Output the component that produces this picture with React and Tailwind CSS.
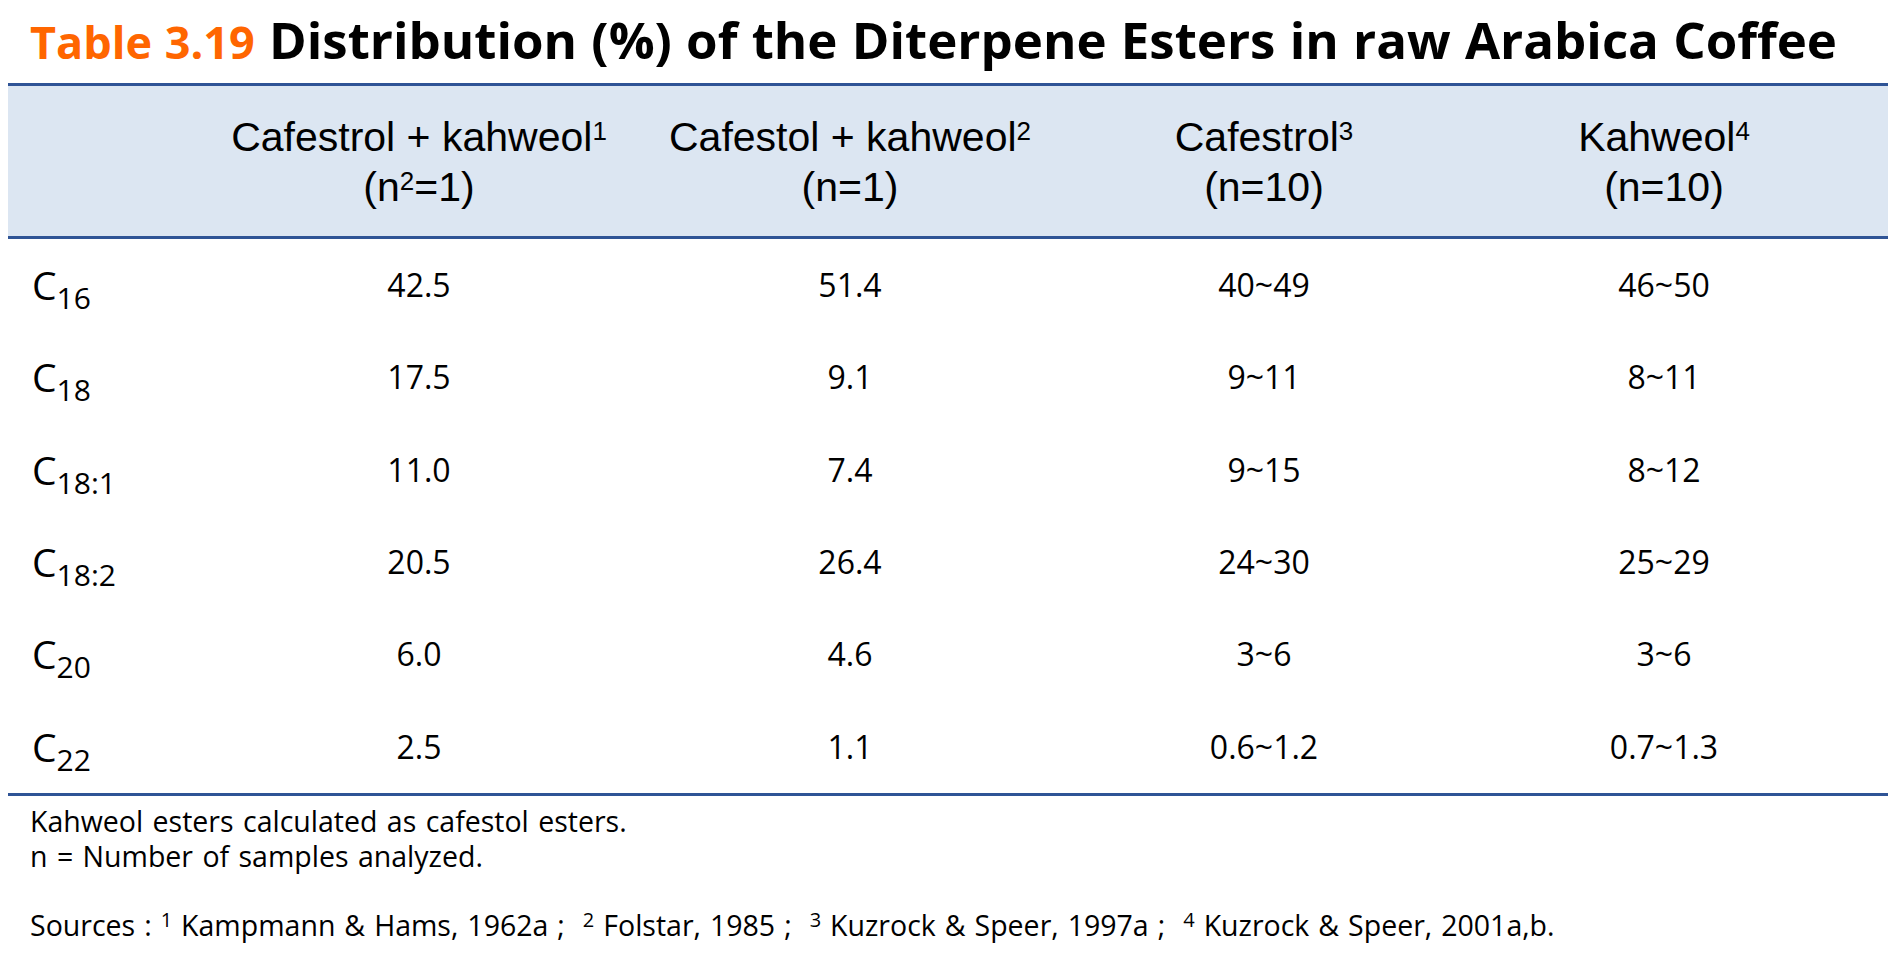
import React from "react";

const rows = [
  { sub: "16", v: ["42.5", "51.4", "40~49", "46~50"] },
  { sub: "18", v: ["17.5", "9.1", "9~11", "8~11"] },
  { sub: "18:1", v: ["11.0", "7.4", "9~15", "8~12"] },
  { sub: "18:2", v: ["20.5", "26.4", "24~30", "25~29"] },
  { sub: "20", v: ["6.0", "4.6", "3~6", "3~6"] },
  { sub: "22", v: ["2.5", "1.1", "0.6~1.2", "0.7~1.3"] },
];

function Sup({ children }) {
  return (
    <span className="relative top-[-11px] text-[26px] leading-none">{children}</span>
  );
}

function FSup({ children }) {
  return (
    <span className="relative top-[-9px] text-[20px] leading-none">{children}</span>
  );
}

function HeadCell({ line1, sup1, line2 }) {
  return (
    <div className="text-center text-[41px] leading-[50px] text-black">
      <div>
        {line1}
        <Sup>{sup1}</Sup>
      </div>
      <div>{line2}</div>
    </div>
  );
}

export default function App() {
  return (
    <div className="w-[1896px] h-[960px] bg-white overflow-hidden text-black font-['Open_Sans','Noto_Sans',sans-serif]">
      <h1 className="h-[72px] pt-[6px] pl-[30px] text-[51px] leading-[66px] font-bold whitespace-nowrap [word-spacing:1px]">
        <span className="text-[#ff6600] text-[45px] leading-none">Table 3.19</span> Distribution (%) of the Diterpene Esters in raw Arabica Coffee
      </h1>

      <div className="mx-[8px] mt-[11px] w-[1880px]">
        <div className="grid grid-cols-[192px_438px_424px_404px_396px_26px] h-[156px] pt-[26px] border-t-[3px] border-b-[3px] border-[#2f5496] bg-[#dce6f2] font-['Liberation_Sans',Arial,sans-serif]">
          <div />
          <HeadCell line1="Cafestrol + kahweol" sup1="1" line2={<>(n<Sup>2</Sup>=1)</>} />
          <HeadCell line1="Cafestol + kahweol" sup1="2" line2="(n=1)" />
          <HeadCell line1="Cafestrol" sup1="3" line2="(n=10)" />
          <HeadCell line1="Kahweol" sup1="4" line2="(n=10)" />
          <div />
        </div>

        <div className="border-b-[3px] border-[#2f5496]">
          {rows.map((r) => (
            <div
              key={r.sub}
              className="grid grid-cols-[192px_438px_424px_404px_396px_26px] h-[92.33px]"
            >
              <div className="pl-[24px] text-[39px] leading-[92.33px] whitespace-nowrap">
                C<span className="relative top-[9px] text-[30px] leading-none">{r.sub}</span>
              </div>
              {r.v.map((val, i) => (
                <div key={i} className="text-center text-[32px] leading-[92.33px]">
                  {val}
                </div>
              ))}
              <div />
            </div>
          ))}
        </div>
      </div>

      <div className="pl-[30px] pt-[8px] text-[28.5px] leading-[35px] [word-spacing:2px]">
        <div>Kahweol esters calculated as cafestol esters.</div>
        <div>n = Number of samples analyzed.</div>
        <div className="mt-[34px] whitespace-pre [word-spacing:1.6px]">
          Sources : <FSup>1</FSup> Kampmann &amp; Hams, 1962a ;{"  "}
          <FSup>2</FSup> Folstar, 1985 ;{"  "}
          <FSup>3</FSup> Kuzrock &amp; Speer, 1997a ;{"  "}
          <FSup>4</FSup> Kuzrock &amp; Speer, 2001a,b.
        </div>
      </div>
    </div>
  );
}
